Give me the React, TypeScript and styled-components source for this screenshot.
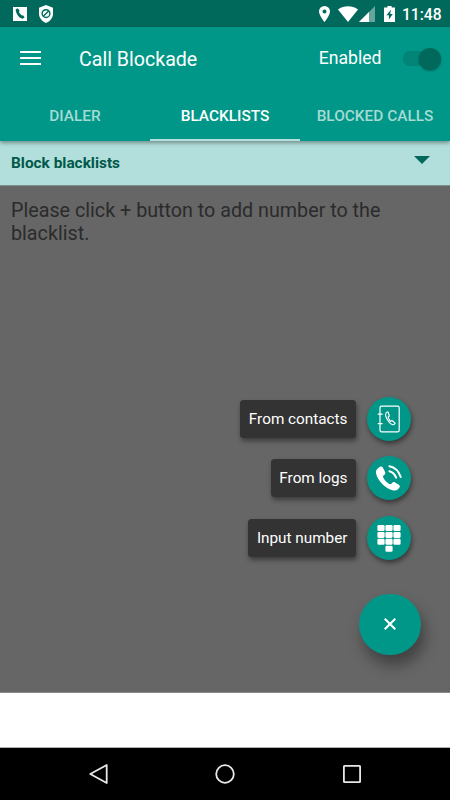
import React from 'react';
import styled, { createGlobalStyle } from 'styled-components';

const GlobalStyle = createGlobalStyle`
  * { box-sizing: border-box; }
  body { margin: 0; background: #fff; }
`;

const Screen = styled.main`
  width: 450px;
  height: 800px;
  display: flex;
  flex-direction: column;
  overflow: hidden;
  background: #fff;
  font-family: Roboto, sans-serif;
`;

const StatusBar = styled.header`
  height: 27px;
  flex: none;
  display: flex;
  align-items: center;
  padding: 0 9px 0 13px;
  background: #00695b;
  color: #fff;
`;

const Clock = styled.time`
  margin-left: 7px;
  width: 39px;
  font-size: 15.6px;
  font-weight: 500;
  line-height: 27px;
  white-space: nowrap;
  padding-top: 3px;
`;

const Glyph = styled.svg<{ $gap?: number }>`
  display: block;
  flex: none;
  margin-left: ${(p) => p.$gap ?? 0}px;
`;

const Spacer = styled.div`
  flex: 1;
`;

const AppBar = styled.div`
  flex: none;
  height: 114px;
  background: #009788;
  box-shadow: 0 2px 4px rgba(0, 0, 0, 0.36);
  z-index: 1;
`;

const Toolbar = styled.div`
  height: 63px;
  display: flex;
  align-items: center;
  padding: 0 9.5px 0 20px;
  color: #fff;
`;

const MenuButton = styled.button`
  display: block;
  padding: 0;
  border: 0;
  background: none;
`;

const Title = styled.h1`
  margin: 2px 0 0 38px;
  font-size: 19.6px;
  font-weight: 400;
  line-height: 24px;
`;

const SwitchLabel = styled.span`
  font-size: 17.6px;
  line-height: 24px;
  margin: 0 21px 1px 0;
`;

const Switch = styled.button`
  width: 38px;
  height: 24px;
  padding: 0;
  border: 0;
  display: flex;
  align-items: center;
  justify-content: flex-end;
  background: linear-gradient(#028577, #028577) 0 center / 32px 15px no-repeat;
  clip-path: path('M8 4 H18 V-4 H46 V30 H18 V20 H8 A8 8 0 0 1 8 4 Z');
`;

const Thumb = styled.span`
  width: 22px;
  height: 22px;
  border-radius: 50%;
  background: #00695b;
  box-shadow: 0 1px 2px rgba(0, 0, 0, 0.35);
`;

const Tabs = styled.nav`
  height: 51px;
  display: grid;
  grid-template-columns: repeat(3, 1fr);
`;

const Tab = styled.button<{ $active?: boolean }>`
  padding: 3px 0 0;
  border: 0;
  border-bottom: 2px solid ${(p) => (p.$active ? '#b2dfdb' : 'transparent')};
  background: none;
  color: ${(p) => (p.$active ? '#fff' : '#a6dad4')};
  font: 500 15.4px/46px Roboto, sans-serif;
  white-space: nowrap;
`;

const Section = styled.div`
  flex: none;
  height: 44px;
  display: flex;
  align-items: center;
  padding: 0 20px 0 11px;
  background: #b2dfdb;
  color: #00594a;
  font-size: 15.4px;
  font-weight: 700;
`;

const Content = styled.section`
  flex: none;
  height: 508px;
  display: flex;
  flex-direction: column;
  border-top: 1px solid #7c8f8d;
  border-bottom: 1px solid #8a8a8a;
  background: #666;
`;

const Hint = styled.p`
  margin: 12.5px 20px 0 11px;
  color: #2b2b2b;
  font-size: 19.73px;
  line-height: 23px;
`;

const Actions = styled.div`
  margin-top: 152.5px;
  padding-right: 39px;
  display: flex;
  flex-direction: column;
  align-items: flex-end;
  gap: 15.3px;
`;

const Action = styled.div`
  display: flex;
  align-items: center;
  gap: 11px;
`;

const ActionLabel = styled.span`
  height: 38px;
  padding: 0 8.5px;
  border-radius: 3.5px;
  background: #333;
  color: #fff;
  font-size: 15.3px;
  line-height: 39px;
  white-space: nowrap;
  box-shadow: 1px 3px 5px rgba(0, 0, 0, 0.42);
`;

const RoundButton = styled.button<{ $large?: boolean }>`
  width: ${(p) => (p.$large ? 61.5 : 44)}px;
  height: ${(p) => (p.$large ? 61.5 : 44)}px;
  padding: 0;
  border: 0;
  border-radius: 50%;
  display: grid;
  place-items: center;
  background: #009788;
  box-shadow: ${(p) =>
    p.$large ? '4px 10px 15px rgba(0, 0, 0, 0.38)' : '1px 3px 5px rgba(0, 0, 0, 0.45)'};
`;

const MainAction = styled.div`
  margin: 34px 29.5px 0 0;
  align-self: flex-end;
`;

const Footer = styled.div`
  flex: 1;
  background: #fff;
  border-bottom: 1px solid #b0b0b0;
`;

const NavBar = styled.footer`
  flex: none;
  height: 52px;
  display: flex;
  align-items: center;
  justify-content: space-between;
  padding: 0 88px;
  background: #000;
`;

const ContactsIcon = () => (
  <svg width="44" height="44" viewBox="0 0 44 44" fill="none" stroke="#fff" strokeLinecap="round">
    <rect x="13" y="9.2" width="19.2" height="25.6" rx="1.6" strokeWidth="1.2" />
    <path d="M11.2 17.2h4M11.2 26.6h4" strokeWidth="1.2" />
    <path
      d="M20.6 14.8c-2.7 1-2.4 4-.7 7 1.8 3.2 4.5 6.7 7 5.8l1.3-1.4-3.2-2.7-1.6.9c-1-1.2-1.8-2.7-2.3-4.2l1.2-1.2-1-3.5z"
      strokeWidth="1.1"
      strokeLinejoin="round"
    />
  </svg>
);

const LogsIcon = () => (
  <svg width="44" height="44" viewBox="0 0 44 44" fill="#fff">
    <path d="M10.5 12.7l2-1.6c1.3-1 2.7-.5 3.5.8l2.1 4c.6 1.2.1 2.3-1 3.1-1.4 1-1.3 1.8-.6 3.1 1.3 2.4 3 4.2 5.400 5.600 1.2.7 2.1.7 3-.5.9-1.2 2-1.5 3.200-.8l3.7 2.3c1.2.8 1.4 2 .5 3.1-1.2 1.6-2.6 2.9-4.5 2.800-7.400-.4-18.300-10.100-18.800-18.400-.1-1.5.4-2.6 1.500-3.500z" />
    <path
      d="M22.4 10.3c5.6 1.1 9.5 5.3 11.3 10.7M22.4 15.2c3.4.9 5.5 3.2 6.7 6.5"
      fill="none"
      stroke="#fff"
      strokeWidth="2"
      strokeLinecap="round"
    />
  </svg>
);

const keypadCells = [
  [0, 0], [1, 0], [2, 0],
  [0, 1], [1, 1], [2, 1],
  [0, 2], [1, 2], [2, 2],
  [1, 3],
];

const KeypadIcon = () => (
  <svg width="44" height="44" viewBox="0 0 44 44" fill="#fff">
    {keypadCells.map(([col, row]) => (
      <rect key={`${col}-${row}`} x={10.4 + col * 8} y={9 + row * 6.9} width="7.2" height="6" rx="1.3" />
    ))}
  </svg>
);

const actions = [
  { label: 'From contacts', Icon: ContactsIcon },
  { label: 'From logs', Icon: LogsIcon },
  { label: 'Input number', Icon: KeypadIcon },
];

export default function App() {
  return (
    <>
      <GlobalStyle />
      <Screen>
        <StatusBar>
          <Glyph width="14" height="14" viewBox="0 0 14 14">
            <path d="M0 0h14v14H0z" fill="#fff" />
            <path d="M2.6 2.6l1.8-1.4 2 2.1-.3 2.1 2.3 2.9 1.9.2 1.3 2.1-2 1.2-3-1.4C4.3 8.4 2.9 5.8 2.6 2.6z" fill="#00695b" />
          </Glyph>
          <Glyph $gap={12} width="14" height="18" viewBox="0 0 14 18">
            <path d="M7 0l7 2.8v6c0 4.2-3 7.5-7 9.2-4-1.7-7-5-7-9.2v-6z" fill="#fff" />
            <circle cx="7" cy="8.6" r="3.9" fill="none" stroke="#00695b" strokeWidth="1.4" />
            <path d="M4.4 11.3l5.2-5.4" stroke="#00695b" strokeWidth="1.4" />
          </Glyph>
          <Spacer />
          <Glyph width="11" height="16" viewBox="0 0 11 16">
            <path d="M5.5 0A5.5 5.5 0 0 0 0 5.5C0 9.5 5.5 16 5.5 16S11 9.5 11 5.5A5.5 5.5 0 0 0 5.5 0zm0 7.4a2 2 0 1 1 0-4 2 2 0 0 1 0 4z" fill="#fff" />
          </Glyph>
          <Glyph $gap={8} width="20" height="16" viewBox="0 0 20 16">
            <path d="M0 3.6C5.8-.8 14.2-.8 20 3.6L10 16z" fill="#fff" />
          </Glyph>
          <Glyph $gap={1} width="16" height="16" viewBox="0 0 16 16">
            <path d="M16 0v16H0z" fill="#66a59d" />
            <path d="M10 6v10H0z" fill="#fff" />
          </Glyph>
          <Glyph $gap={9} width="11" height="16" viewBox="0 0 11 16">
            <path d="M3.4 0h4.2v1.6H11V16H0V1.6h3.4z" fill="#fff" />
            <path d="M7 3.8L2.4 9.2h2.5v4.2L8.8 8H6.2z" fill="#00695b" />
          </Glyph>
          <Clock>11:48</Clock>
        </StatusBar>

        <AppBar>
          <Toolbar>
            <MenuButton aria-label="Menu">
              <Glyph width="21" height="15" viewBox="0 0 21 15">
                <path d="M0 1h21M0 7h21M0 13h21" stroke="#fff" strokeWidth="2" />
              </Glyph>
            </MenuButton>
            <Title>Call Blockade</Title>
            <Spacer />
            <SwitchLabel>Enabled</SwitchLabel>
            <Switch role="switch" aria-checked="true" aria-label="Enabled">
              <Thumb />
            </Switch>
          </Toolbar>
          <Tabs>
            <Tab>DIALER</Tab>
            <Tab $active>BLACKLISTS</Tab>
            <Tab>BLOCKED CALLS</Tab>
          </Tabs>
        </AppBar>

        <Section>
          Block blacklists
          <Spacer />
          <Glyph width="16" height="14" viewBox="0 0 16 14">
            <path d="M0 0h16L8 8z" fill="#00695b" />
          </Glyph>
        </Section>

        <Content>
          <Hint>Please click + button to add number to the blacklist.</Hint>
          <Actions>
            {actions.map(({ label, Icon }) => (
              <Action key={label}>
                <ActionLabel>{label}</ActionLabel>
                <RoundButton aria-label={label}>
                  <Icon />
                </RoundButton>
              </Action>
            ))}
          </Actions>
          <MainAction>
            <RoundButton $large aria-label="Close">
              <svg width="12" height="12" viewBox="0 0 12 12">
                <path d="M.7.7l10.6 10.6M11.3.7L.7 11.3" stroke="#fff" strokeWidth="2" />
              </svg>
            </RoundButton>
          </MainAction>
        </Content>
        <Footer />

        <NavBar>
          <Glyph width="20" height="20" viewBox="0 0 20 20">
            <path d="M18.7 1v18L2.3 10z" fill="none" stroke="#e8e8e8" strokeWidth="1.8" strokeLinejoin="round" />
          </Glyph>
          <Glyph width="20" height="20" viewBox="0 0 20 20">
            <circle cx="10" cy="10" r="8.8" fill="none" stroke="#e8e8e8" strokeWidth="1.8" />
          </Glyph>
          <Glyph width="20" height="20" viewBox="0 0 20 20">
            <rect x="1.9" y="1.9" width="16.2" height="16.2" rx=".6" fill="none" stroke="#e8e8e8" strokeWidth="1.8" />
          </Glyph>
        </NavBar>
      </Screen>
    </>
  );
}
